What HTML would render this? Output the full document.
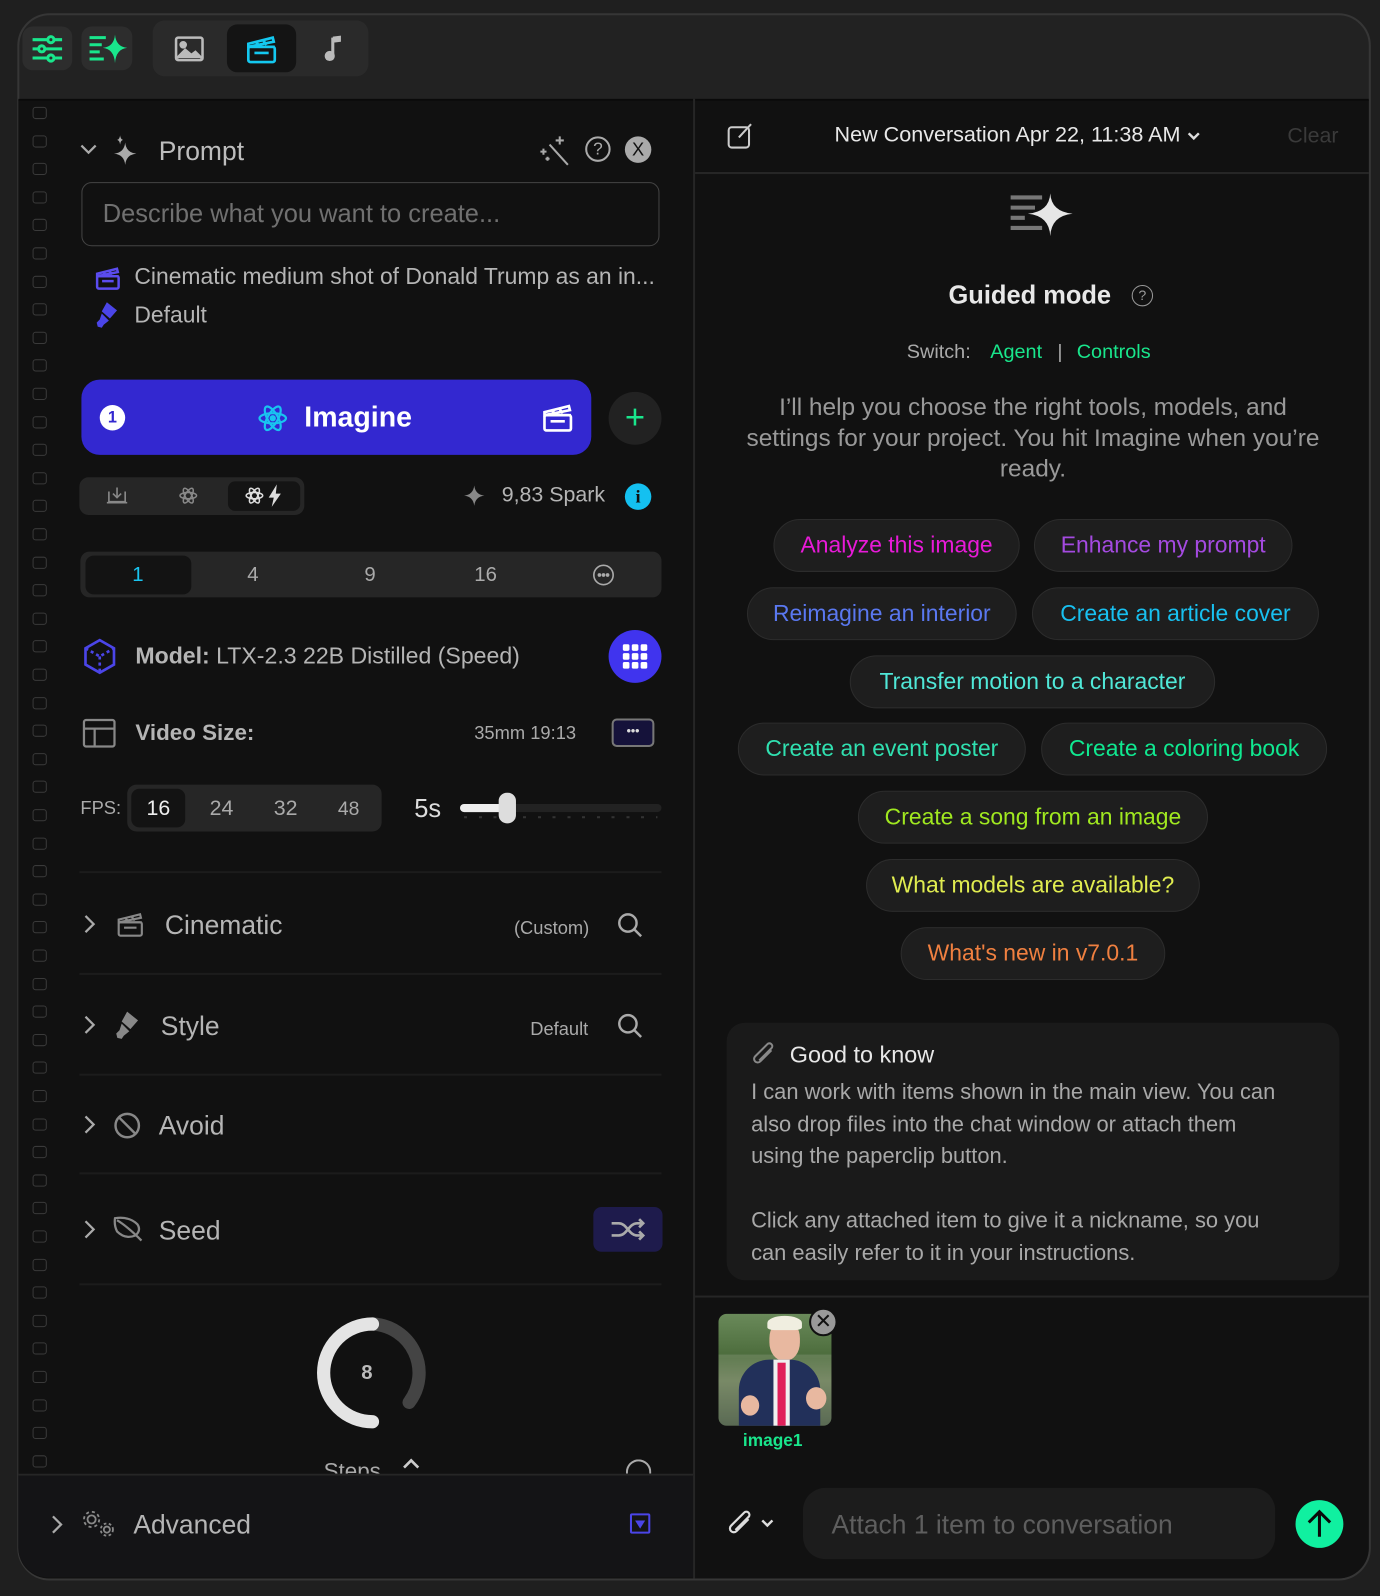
<!DOCTYPE html>
<html><head><meta charset="utf-8"><style>
*{box-sizing:border-box;margin:0;padding:0}
html,body{width:1380px;height:1596px;overflow:hidden;background:#1f1f1f;font-family:"Liberation Sans",sans-serif}
#s{position:absolute;left:0;top:0;width:1356px;height:1568px;transform:scale(1.0177);transform-origin:0 0}
.a{position:absolute}
.t{position:absolute;white-space:nowrap}
.chip{position:absolute;height:52px;border-radius:26px;background:#1e1e1e;border:1px solid #2c2c2c;font-size:22.5px;line-height:50px;text-align:center;white-space:nowrap}
.cb{position:absolute;left:32px;width:14px;height:12px;border:1.5px solid #3a3a3a;border-radius:3px}
.hr{position:absolute;left:78px;width:572px;height:2px;background:#1c1c1c}
svg{position:absolute}
</style></head><body><div id="s">
<div class="a" style="left:17px;top:13px;width:1330px;height:1540px;border:2px solid #363636;border-radius:32px;background:#222"></div>
<div class="a" style="left:22px;top:26px;width:49px;height:43px;background:#2d2d2d;border-radius:10px"></div>
<svg style="left:30px;top:33px" width="33" height="30" viewBox="0 0 33 30" fill="none" stroke="#19e68c" stroke-width="3"><path d="M2 6h29M2 15h29M2 24h29"/><circle cx="20" cy="6" r="3" fill="#2d2d2d"/><circle cx="11" cy="15" r="3" fill="#2d2d2d"/><circle cx="20" cy="24" r="3" fill="#2d2d2d"/></svg>
<div class="a" style="left:80px;top:26px;width:50px;height:43px;background:#2d2d2d;border-radius:10px"></div>
<svg style="left:87px;top:32px" width="40" height="32" viewBox="0 0 40 32"><g stroke="#19e68c" stroke-width="3"><path d="M1 5h16M1 12h12M1 19h10M1 26h14"/></g><path d="M26 2 Q27 14 38 15 Q27 16 26 30 Q25 16 14 15 Q25 14 26 2Z" fill="#19e68c"/></svg>
<div class="a" style="left:150px;top:20px;width:212px;height:55px;background:#2a2a2a;border-radius:12px"></div>
<svg style="left:171px;top:35px" width="30" height="26" viewBox="0 0 30 26" fill="none" stroke="#bbb" stroke-width="2.5"><rect x="2" y="2" width="26" height="22" rx="2"/><path d="M3 22l8-8 6 5 4-3 6 6" fill="#bbb"/><circle cx="9" cy="9" r="2.5" fill="#bbb"/></svg>
<div class="a" style="left:223px;top:24px;width:68px;height:47px;background:#141414;border-radius:10px"></div>
<svg style="left:241px;top:32px" width="32" height="32" viewBox="0 0 32 32" fill="none" stroke="#14c8f0" stroke-width="2.6"><rect x="3" y="14" width="26" height="15" rx="2"/><path d="M3 14h26M3 14l0-3 24-6 1 4z"/><path d="M10 9l4 4M17 7l4 5M9 20h14"/></svg>
<svg style="left:318px;top:33px" width="20" height="30" viewBox="0 0 20 30"><path d="M9 4v18" stroke="#bbb" stroke-width="3"/><circle cx="6" cy="22" r="5" fill="#bbb"/><path d="M9 3l8-1v6l-8 1z" fill="#bbb"/></svg>
<div class="a" style="left:18px;top:97px;width:1327px;height:1454px;background:#111;border-top:2px solid #0a0a0a;border-radius:0 0 30px 30px"></div>
<div class="a" style="left:681px;top:97px;width:2px;height:1454px;background:#262626"></div>
<div id="g"></div>
<script>
var g='';for(var i=0;i<49;i++){g+='<div class="cb" style="top:'+(105+i*27.6)+'px"></div>'}document.getElementById('g').innerHTML=g;
</script>
<svg style="left:78px;top:140px" width="18" height="14" viewBox="0 0 18 14" fill="none" stroke="#aaa" stroke-width="2.2"><path d="M2 3l7 7 7-7"/></svg>
<svg style="left:110px;top:132px" width="30" height="32" viewBox="0 0 30 32" fill="#aaa"><path d="M13 8Q14 18 24 19Q14 20 13 30Q12 20 2 19Q12 18 13 8Z"/><path d="M8 1Q8.5 5 11 5.5Q8.5 6 8 10Q7.5 6 5 5.5Q7.5 5 8 1Z"/></svg>
<div class="t" style="left:156px;top:133px;font-size:26px;color:#bdbdbd">Prompt</div>
<svg style="left:528px;top:132px" width="32" height="32" viewBox="0 0 32 32" fill="none" stroke="#aaa" stroke-width="2"><path d="M12 10l18 20"/><path d="M22 2v8M18 6h8M6 14v6M3 17h6M10 22v4M8 24h4"/></svg>
<div class="a" style="left:575px;top:134px;width:25px;height:25px;border:2px solid #aaa;border-radius:50%;color:#aaa;font-size:17px;text-align:center;line-height:21px">?</div>
<div class="a" style="left:614px;top:134px;width:26px;height:26px;background:#aaa;border-radius:50%;color:#111;font-size:18px;text-align:center;line-height:26px">X</div>
<div class="a" style="left:80px;top:179px;width:568px;height:63px;border:1.5px solid #444;border-radius:10px"></div>
<div class="t" style="left:101px;top:196px;font-size:25px;color:#707070">Describe what you want to create...</div>
<svg style="left:93px;top:260px" width="26" height="26" viewBox="0 0 32 32" fill="none" stroke="#5b4cf0" stroke-width="3"><rect x="3" y="14" width="26" height="15" rx="2"/><path d="M3 14h26M3 14l0-3 24-6 1 4z"/><path d="M10 9l4 4M17 7l4 5M9 20h14"/></svg>
<div class="t" style="left:132px;top:259px;font-size:22.5px;color:#b5b5b5">Cinematic medium shot of Donald Trump as an in...</div>
<svg style="left:93px;top:296px" width="26" height="28" viewBox="0 0 26 28" fill="#4b45e8"><path d="M12 1l10 8-7 8-8-7zM7 12l7 7-5 4-2 3-4-1-1-4 3-3z"/></svg>
<div class="t" style="left:132px;top:297px;font-size:22.5px;color:#b5b5b5">Default</div>
<div class="a" style="left:80px;top:373px;width:501px;height:74px;background:#3328d0;border-radius:18px"></div>
<div class="a" style="left:98px;top:398px;width:25px;height:25px;background:#fff;border-radius:50%;color:#3328d0;font-size:16px;font-weight:bold;text-align:center;line-height:25px">1</div>
<svg style="left:253px;top:395px" width="30" height="32" viewBox="0 0 30 32" fill="none" stroke="#19c4f0" stroke-width="2.2"><ellipse cx="15" cy="16" rx="13" ry="5"/><ellipse cx="15" cy="16" rx="13" ry="5" transform="rotate(60 15 16)"/><ellipse cx="15" cy="16" rx="13" ry="5" transform="rotate(120 15 16)"/><circle cx="15" cy="16" r="2" fill="#19c4f0"/></svg>
<div class="t" style="left:299px;top:394px;font-size:28px;font-weight:bold;color:#fff">Imagine</div>
<svg style="left:532px;top:394px" width="32" height="32" viewBox="0 0 32 32" fill="none" stroke="#fff" stroke-width="2.6"><rect x="3" y="14" width="26" height="15" rx="2"/><path d="M3 14h26M3 14l0-3 24-6 1 4z"/><path d="M10 9l4 4M17 7l4 5M9 20h14"/></svg>
<div class="a" style="left:598px;top:385px;width:52px;height:52px;background:#222;border-radius:50%;color:#19e68c;font-size:34px;text-align:center;line-height:50px">+</div>
<div class="a" style="left:78px;top:469px;width:221px;height:37px;background:#262626;border-radius:9px"></div>
<div class="a" style="left:224px;top:473px;width:71px;height:29px;background:#141414;border-radius:7px"></div>
<svg style="left:104px;top:477px" width="22" height="20" viewBox="0 0 22 20" fill="none" stroke="#888" stroke-width="1.6"><path d="M3 6v10h16V6M11 2v10M7 8l4 4 4-4M1 17h20"/></svg>
<svg style="left:175px;top:477px" width="20" height="20" viewBox="0 0 30 32" fill="none" stroke="#888" stroke-width="2.4"><ellipse cx="15" cy="16" rx="13" ry="5"/><ellipse cx="15" cy="16" rx="13" ry="5" transform="rotate(60 15 16)"/><ellipse cx="15" cy="16" rx="13" ry="5" transform="rotate(120 15 16)"/></svg>
<svg style="left:240px;top:477px" width="20" height="20" viewBox="0 0 30 32" fill="none" stroke="#ddd" stroke-width="2.4"><ellipse cx="15" cy="16" rx="13" ry="5"/><ellipse cx="15" cy="16" rx="13" ry="5" transform="rotate(60 15 16)"/><ellipse cx="15" cy="16" rx="13" ry="5" transform="rotate(120 15 16)"/></svg>
<svg style="left:263px;top:476px" width="14" height="22" viewBox="0 0 14 22" fill="#ddd"><path d="M9 0L1 13h5l-2 9 9-13H8z"/></svg>
<svg style="left:455px;top:476px" width="22" height="22" viewBox="0 0 22 22" fill="#888"><path d="M11 1Q12 10 21 11Q12 12 11 21Q10 12 1 11Q10 10 11 1Z"/></svg>
<div class="t" style="left:493px;top:475px;font-size:21px;color:#b5b5b5">9,83 Spark</div>
<div class="a" style="left:614px;top:475px;width:26px;height:26px;background:#14c0f0;border-radius:50%;color:#111;font-size:18px;font-weight:bold;text-align:center;line-height:26px;font-family:'Liberation Serif',serif">i</div>
<div class="a" style="left:79px;top:542px;width:571px;height:45px;background:#262626;border-radius:9px"></div>
<div class="a" style="left:84px;top:546px;width:104px;height:38px;background:#131313;border-radius:8px"></div>
<div class="t" style="left:130px;top:554px;font-size:20px;color:#19c4f0">1</div>
<div class="t" style="left:243px;top:554px;font-size:20px;color:#aaa">4</div>
<div class="t" style="left:358px;top:554px;font-size:20px;color:#aaa">9</div>
<div class="t" style="left:466px;top:554px;font-size:20px;color:#aaa">16</div>
<svg style="left:582px;top:554px" width="22" height="22" viewBox="0 0 22 22" fill="none" stroke="#aaa" stroke-width="1.6"><circle cx="11" cy="11" r="9.5"/><circle cx="7" cy="11" r="1" fill="#aaa"/><circle cx="11" cy="11" r="1" fill="#aaa"/><circle cx="15" cy="11" r="1" fill="#aaa"/></svg>
<svg style="left:81px;top:627px" width="34" height="36" viewBox="0 0 34 36" fill="none" stroke="#4b45e8" stroke-width="2.6"><path d="M17 2l14 8v16l-14 8-14-8V10z"/><path d="M3 10l14 8 14-8M17 18v16" stroke-dasharray="3 3"/></svg>
<div class="t" style="left:133px;top:631px;font-size:22.7px;color:#b5b5b5"><b>Model:</b> LTX-2.3 22B Distilled (Speed)</div>
<div class="a" style="left:598px;top:619px;width:52px;height:52px;background:#4034ee;border-radius:50%"></div>
<svg style="left:611px;top:632px" width="26" height="26" viewBox="0 0 26 26" fill="#fff"><rect x="1" y="1" width="6.5" height="6.5" rx="1.5"/><rect x="9.8" y="1" width="6.5" height="6.5" rx="1.5"/><rect x="18.5" y="1" width="6.5" height="6.5" rx="1.5"/><rect x="1" y="9.8" width="6.5" height="6.5" rx="1.5"/><rect x="9.8" y="9.8" width="6.5" height="6.5" rx="1.5"/><rect x="18.5" y="9.8" width="6.5" height="6.5" rx="1.5"/><rect x="1" y="18.5" width="6.5" height="6.5" rx="1.5"/><rect x="9.8" y="18.5" width="6.5" height="6.5" rx="1.5"/><rect x="18.5" y="18.5" width="6.5" height="6.5" rx="1.5"/></svg>
<svg style="left:81px;top:706px" width="33" height="29" viewBox="0 0 33 29" fill="none" stroke="#888" stroke-width="2.2"><rect x="1.5" y="1.5" width="30" height="26" rx="2"/><path d="M1.5 10h30M12 10v17.5"/></svg>
<div class="t" style="left:133px;top:707px;font-size:22px;font-weight:bold;color:#b5b5b5">Video Size:</div>
<div class="t" style="left:466px;top:710px;font-size:18px;color:#aaa">35mm 19:13</div>
<div class="a" style="left:601px;top:706px;width:42px;height:28px;border:2px solid #777;background:#15123a;border-radius:5px;color:#ddd;font-size:12px;text-align:center;line-height:20px;font-weight:bold">•••</div>
<div class="t" style="left:79px;top:784px;font-size:18px;color:#aaa">FPS:</div>
<div class="a" style="left:125px;top:771px;width:250px;height:46px;background:#262626;border-radius:9px"></div>
<div class="a" style="left:129px;top:775px;width:53px;height:38px;background:#131313;border-radius:8px"></div>
<div class="t" style="left:144px;top:783px;font-size:21px;color:#eee">16</div>
<div class="t" style="left:206px;top:783px;font-size:21px;color:#aaa">24</div>
<div class="t" style="left:269px;top:783px;font-size:21px;color:#aaa">32</div>
<div class="t" style="left:332px;top:785px;font-size:19px;color:#aaa">48</div>
<div class="t" style="left:407px;top:781px;font-size:25px;color:#ddd">5s</div>
<div class="a" style="left:452px;top:790px;width:198px;height:8px;background:#222;border-radius:4px"></div>
<div class="a" style="left:452px;top:790px;width:48px;height:8px;background:#eee;border-radius:4px"></div>
<div class="a" style="left:456px;top:802px;width:190px;height:2px;background:repeating-linear-gradient(90deg,#333 0 3px,transparent 3px 14.5px)"></div>
<div class="a" style="left:490px;top:779px;width:17px;height:30px;background:#ddd;border-radius:8px"></div>
<div class="hr" style="top:856px"></div>
<svg style="left:81px;top:898px" width="14" height="20" viewBox="0 0 14 20" fill="none" stroke="#aaa" stroke-width="2.2"><path d="M3 2l8 8-8 8"/></svg>
<svg style="left:113px;top:894px" width="30" height="28" viewBox="0 0 32 32" fill="none" stroke="#888" stroke-width="2.4"><rect x="3" y="14" width="26" height="15" rx="2"/><path d="M3 14h26M3 14l0-3 24-6 1 4z"/><path d="M10 9l4 4M17 7l4 5M9 20h14"/></svg>
<div class="t" style="left:162px;top:894px;font-size:26px;color:#b5b5b5">Cinematic</div>
<div class="t" style="left:505px;top:902px;font-size:18px;color:#aaa">(Custom)</div>
<svg style="left:606px;top:896px" width="26" height="26" viewBox="0 0 26 26" fill="none" stroke="#aaa" stroke-width="2.4"><circle cx="11" cy="11" r="8.5"/><path d="M17 17l7 7"/></svg>
<div class="hr" style="top:956px"></div>
<svg style="left:81px;top:997px" width="14" height="20" viewBox="0 0 14 20" fill="none" stroke="#aaa" stroke-width="2.2"><path d="M3 2l8 8-8 8"/></svg>
<svg style="left:111px;top:993px" width="30" height="30" viewBox="0 0 26 28" fill="#888"><path d="M12 1l10 8-7 8-8-7zM7 12l7 7-5 4-2 3-4-1-1-4 3-3z"/></svg>
<div class="t" style="left:158px;top:993px;font-size:26px;color:#b5b5b5">Style</div>
<div class="t" style="left:521px;top:1001px;font-size:18px;color:#aaa">Default</div>
<svg style="left:606px;top:995px" width="26" height="26" viewBox="0 0 26 26" fill="none" stroke="#aaa" stroke-width="2.4"><circle cx="11" cy="11" r="8.5"/><path d="M17 17l7 7"/></svg>
<div class="hr" style="top:1055px"></div>
<svg style="left:81px;top:1095px" width="14" height="20" viewBox="0 0 14 20" fill="none" stroke="#aaa" stroke-width="2.2"><path d="M3 2l8 8-8 8"/></svg>
<svg style="left:111px;top:1092px" width="28" height="28" viewBox="0 0 28 28" fill="none" stroke="#888" stroke-width="2.4"><circle cx="14" cy="14" r="11.5"/><path d="M6 6l16 16"/></svg>
<div class="t" style="left:156px;top:1091px;font-size:26px;color:#b5b5b5">Avoid</div>
<div class="hr" style="top:1152px"></div>
<svg style="left:81px;top:1198px" width="14" height="20" viewBox="0 0 14 20" fill="none" stroke="#aaa" stroke-width="2.2"><path d="M3 2l8 8-8 8"/></svg>
<svg style="left:111px;top:1194px" width="30" height="28" viewBox="0 0 30 28" fill="none" stroke="#888" stroke-width="2.2"><path d="M2 3q14-2 22 6 4 6-2 11-10 4-18-4-3-6-2-13zM4 5q10 6 24 20"/></svg>
<div class="t" style="left:156px;top:1194px;font-size:26px;color:#b5b5b5">Seed</div>
<div class="a" style="left:583px;top:1186px;width:68px;height:44px;background:#1e1b4c;border-radius:8px"></div>
<svg style="left:600px;top:1196px" width="34" height="24" viewBox="0 0 34 24" fill="none" stroke="#aaa" stroke-width="2.6"><path d="M1 6h7c8 0 10 12 18 12h5M1 18h7c8 0 10-12 18-12h5M28 2l4 4-4 4M28 14l4 4-4 4"/></svg>
<div class="hr" style="top:1261px"></div>
<svg style="left:306px;top:1293px" width="116" height="112" viewBox="0 0 116 112" fill="none" stroke-width="13" stroke-linecap="round"><path d="M60 8a48 48 0 0 1 36 77" stroke="#444"/><path d="M60 8a48 48 0 1 0 0 96" stroke="#e4e4e4"/></svg>
<div class="t" style="left:355px;top:1338px;font-size:20px;font-weight:bold;color:#bbb">8</div>
<div class="t" style="left:318px;top:1433px;font-size:22px;color:#aaa;height:15px;overflow:hidden">Steps</div>
<svg style="left:395px;top:1432px" width="18" height="12" viewBox="0 0 18 12" fill="none" stroke="#ccc" stroke-width="2.6"><path d="M2 10l7-7 7 7"/></svg>
<div class="a" style="left:615px;top:1434px;width:25px;height:14px;border:2px solid #aaa;border-bottom:none;border-radius:13px 13px 0 0"></div>
<div class="a" style="left:18px;top:1448px;width:663px;height:102px;background:#141416;border-top:2px solid #262626;border-bottom-left-radius:30px"></div>
<svg style="left:49px;top:1488px" width="14" height="20" viewBox="0 0 14 20" fill="none" stroke="#aaa" stroke-width="2.2"><path d="M3 2l8 8-8 8"/></svg>
<svg style="left:80px;top:1483px" width="34" height="28" viewBox="0 0 34 28" fill="none" stroke="#888" stroke-width="1.8"><circle cx="10" cy="10" r="4"/><circle cx="10" cy="10" r="7.5" stroke-dasharray="3 2.9"/><circle cx="25" cy="20" r="3"/><circle cx="25" cy="20" r="6" stroke-dasharray="2.6 2.4"/></svg>
<div class="t" style="left:131px;top:1483px;font-size:26px;color:#b5b5b5">Advanced</div>
<div class="a" style="left:619px;top:1487px;width:20px;height:20px;border:2px solid #4b45e8;border-radius:2px"></div>
<svg style="left:624px;top:1494px" width="10" height="8" viewBox="0 0 10 8" fill="#4b45e8"><path d="M0 0h10L5 8z"/></svg>
<div class="a" style="left:683px;top:169px;width:662px;height:2px;background:#262626"></div>
<svg style="left:714px;top:120px" width="27" height="27" viewBox="0 0 27 27" fill="none" stroke="#ccc" stroke-width="2"><rect x="2" y="5" width="20" height="20" rx="3"/><path d="M12 15l12-13"/></svg>
<div class="t" style="left:820px;top:121px;font-size:21.2px;color:#e8e8e8">New Conversation Apr 22, 11:38 AM</div>
<svg style="left:1166px;top:129px" width="14" height="10" viewBox="0 0 14 10" fill="none" stroke="#ddd" stroke-width="2.4"><path d="M2 2l5 5 5-5"/></svg>
<div class="t" style="left:1265px;top:122px;font-size:21px;color:#3a3a3a">Clear</div>
<svg style="left:993px;top:186px" width="62" height="50" viewBox="0 0 62 50"><g stroke="#777" stroke-width="4"><path d="M0 8h31M0 18h24M0 28h14M0 38h31"/></g><path d="M39 4Q40 22 61 24Q40 26 39 46Q38 26 17 24Q38 22 39 4Z" fill="#e6e6e6"/></svg>
<div class="t" style="left:932px;top:276px;font-size:25px;font-weight:bold;color:#e8e8e8">Guided mode</div>
<div class="a" style="left:1112px;top:280px;width:21px;height:21px;border:1.5px solid #999;border-radius:50%;color:#999;font-size:14px;text-align:center;line-height:18px">?</div>
<div class="t" style="left:891px;top:335px;font-size:19.5px;color:#aaa">Switch:</div>
<div class="t" style="left:973px;top:335px;font-size:19.5px;color:#19e68c">Agent</div>
<div class="t" style="left:1039px;top:335px;font-size:19.5px;color:#aaa">|</div>
<div class="t" style="left:1058px;top:335px;font-size:19.5px;color:#19e68c">Controls</div>
<div class="a" style="left:690px;top:386px;width:650px;font-size:24px;line-height:30px;color:#999;text-align:center;white-space:nowrap">I’ll help you choose the right tools, models, and<br>settings for your project. You hit Imagine when you’re<br>ready.</div>
<div class="chip" style="left:760px;top:510px;width:242px;color:#e81ad8">Analyze this image</div>
<div class="chip" style="left:1016px;top:510px;width:254px;color:#a44ae0">Enhance my prompt</div>
<div class="chip" style="left:734px;top:577px;width:265px;color:#5a78f0">Reimagine an interior</div>
<div class="chip" style="left:1014px;top:577px;width:282px;color:#18c0f0">Create an article cover</div>
<div class="chip" style="left:835px;top:644px;width:359px;color:#50e8d8">Transfer motion to a character</div>
<div class="chip" style="left:725px;top:710px;width:283px;color:#30e0b0">Create an event poster</div>
<div class="chip" style="left:1023px;top:710px;width:281px;color:#10e890">Create a coloring book</div>
<div class="chip" style="left:843px;top:777px;width:344px;color:#a0e820">Create a song from an image</div>
<div class="chip" style="left:851px;top:844px;width:328px;color:#e0ec50">What models are available?</div>
<div class="chip" style="left:885px;top:911px;width:260px;color:#f08040">What's new in v7.0.1</div>
<div class="a" style="left:714px;top:1005px;width:602px;height:253px;background:#1a1a1a;border-radius:18px"></div>
<svg style="left:738px;top:1022px" width="26" height="28" viewBox="0 0 26 28" fill="none" stroke="#888" stroke-width="2"><path d="M20 10L9 21a3.5 3.5 0 0 1-5-5L16 4a2.5 2.5 0 0 1 4 4L8 20"/></svg>
<div class="t" style="left:776px;top:1023px;font-size:23px;color:#e8e8e8">Good to know</div>
<div class="a" style="left:738px;top:1058px;width:575px;font-size:21.5px;line-height:31.5px;color:#a8a8a8;white-space:nowrap">I can work with items shown in the main view. You can<br>also drop files into the chat window or attach them<br>using the paperclip button.<br><br>Click any attached item to give it a nickname, so you<br>can easily refer to it in your instructions.</div>
<div class="a" style="left:683px;top:1273px;width:662px;height:2px;background:#262626"></div>
<div class="a" style="left:706px;top:1291px;width:111px;height:110px;border-radius:8px;overflow:hidden;background:linear-gradient(180deg,#6a8a5a 0%,#4a6a3a 40%,#6e7e5a 60%,#3b4a3a 100%)">
<div class="a" style="left:0;top:40px;width:111px;height:70px;background:#8a9a7a;opacity:.4"></div>
<div class="a" style="left:50px;top:6px;width:30px;height:40px;border-radius:45%;background:#e8b8a0"></div>
<div class="a" style="left:48px;top:2px;width:34px;height:14px;border-radius:50% 50% 20% 20%;background:#f0eee0"></div>
<div class="a" style="left:20px;top:45px;width:80px;height:70px;border-radius:30px 30px 0 0;background:#22305a"></div>
<div class="a" style="left:54px;top:45px;width:16px;height:65px;background:#f0f0f0"></div>
<div class="a" style="left:58px;top:48px;width:8px;height:62px;background:#e0205a"></div>
<div class="a" style="left:22px;top:80px;width:18px;height:20px;border-radius:50%;background:#e8b8a0"></div>
<div class="a" style="left:86px;top:72px;width:20px;height:22px;border-radius:50%;background:#e8b8a0"></div>
</div>
<div class="a" style="left:795px;top:1285px;width:28px;height:28px;background:#999;border:2px solid #111;border-radius:50%;color:#111;font-size:20px;text-align:center;line-height:24px">✕</div>
<div class="t" style="left:730px;top:1406px;font-size:17px;font-weight:bold;color:#19e68c">image1</div>
<svg style="left:714px;top:1482px" width="28" height="30" viewBox="0 0 26 28" fill="none" stroke="#ddd" stroke-width="2"><path d="M20 10L9 21a3.5 3.5 0 0 1-5-5L16 4a2.5 2.5 0 0 1 4 4L8 20"/></svg>
<svg style="left:747px;top:1492px" width="14" height="10" viewBox="0 0 14 10" fill="none" stroke="#ddd" stroke-width="2.4"><path d="M2 2l5 5 5-5"/></svg>
<div class="a" style="left:789px;top:1462px;width:464px;height:70px;background:#1c1c1c;border-radius:22px"></div>
<div class="t" style="left:817px;top:1483px;font-size:26px;color:#5e5e5e">Attach 1 item to conversation</div>
<div class="a" style="left:1273px;top:1474px;width:47px;height:47px;background:#10f0a0;border-radius:50%"></div>
<svg style="left:1284px;top:1483px" width="25" height="29" viewBox="0 0 25 29" fill="none" stroke="#0a0a0a" stroke-width="3"><path d="M12.5 27V3M2 13L12.5 2.5 23 13"/></svg>
</div></body></html>
